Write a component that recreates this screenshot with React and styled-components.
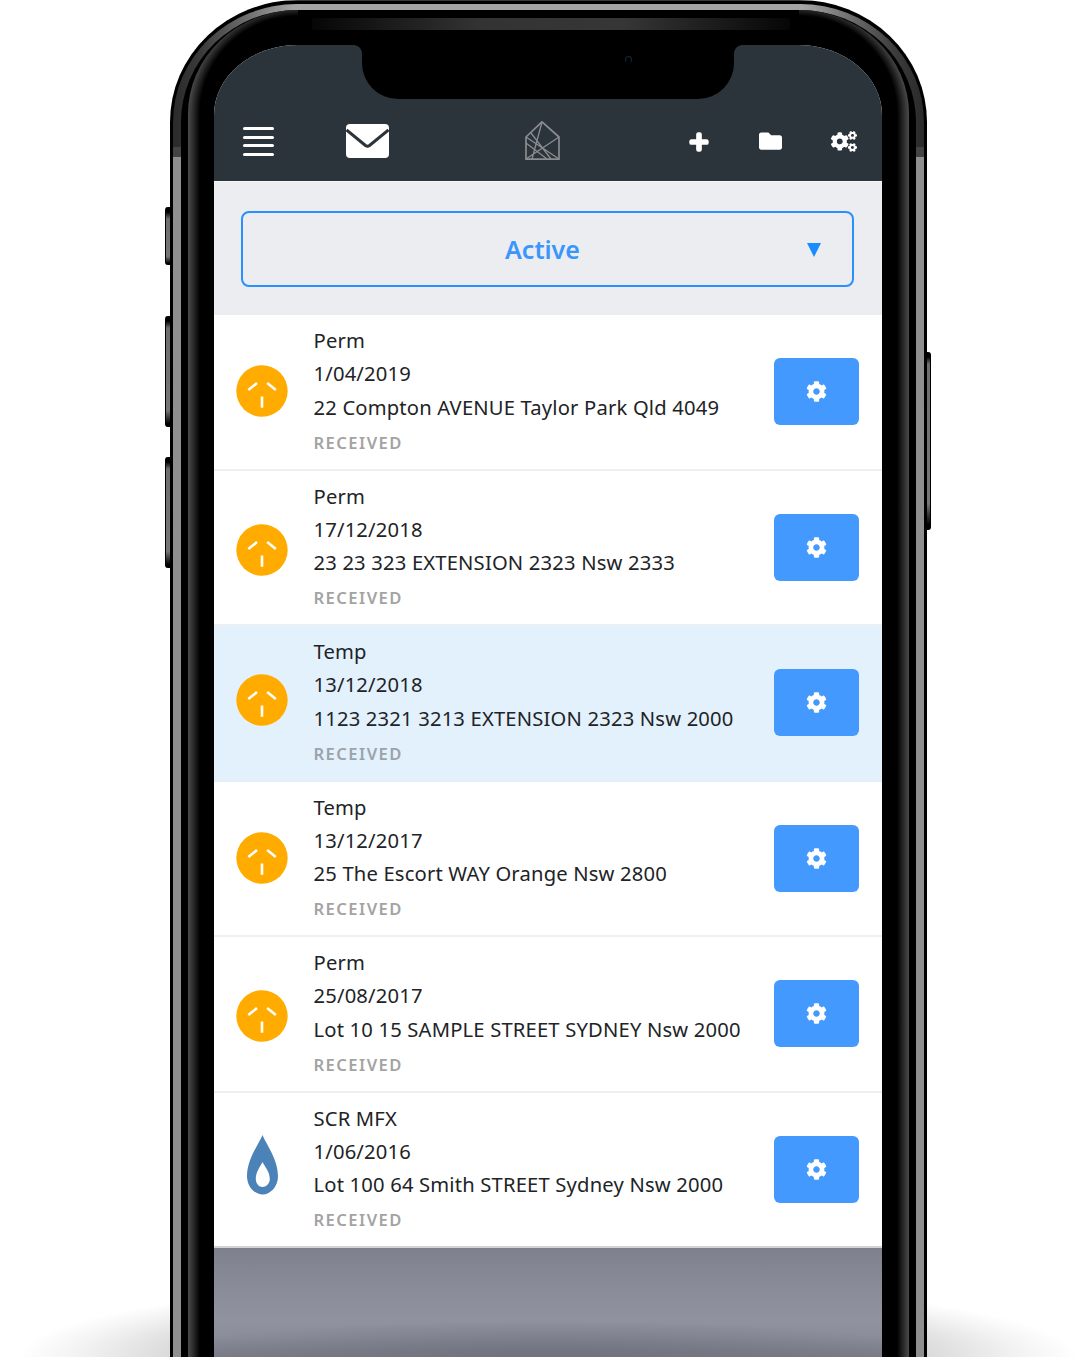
import React from "react";
import styled, { createGlobalStyle } from "styled-components";
import { FaCog, FaCogs, FaFolder, FaPlus } from "react-icons/fa";

const Global = createGlobalStyle`
  html, body { margin: 0; padding: 0; background: #fff; }
  * { box-sizing: border-box; }
`;

const Stage = styled.div`
  position: relative;
  width: 1092px;
  height: 1357px;
  overflow: hidden;
  padding-left: 170px;
  background: #fff;
  font-family: "Noto Sans", "Open Sans", sans-serif;
`;
const FloorShadow = styled.div`
  position: absolute;
  left: 18px;
  top: 1280px;
  width: 1060px;
  height: 154px;
  background: radial-gradient(closest-side, #aaa 0%, #dadada 71%, #f4f4f4 90%, #ffffff 100%);
`;
const Shell = styled.div`
  position: relative;
  width: 757px;
  height: 1560px;
  padding: 4px 3px 0;
  border-radius: 128px 128px 0 0 / 122px 122px 0 0;
  background: linear-gradient(#3a3a3a 0 1px, #000 1px);
`;
const SideKey = styled.div`
  position: absolute;
  top: ${(p) => p.$top}px;
  ${(p) => (p.$right ? "right: -4px;" : "left: -5px;")}
  width: ${(p) => (p.$right ? 4 : 5)}px;
  height: ${(p) => p.$h}px;
  border-radius: ${(p) => (p.$right ? "0 3px 3px 0" : "3px 0 0 3px")};
  background: linear-gradient(#000 0 5px, #6e6e6e 12px, #777 85%, #000 97%);
  border: solid #000;
  border-width: ${(p) => (p.$right ? "0 1px 0 0" : "0 0 0 1px")};
`;
const AntennaBand = styled.div`
  position: absolute;
  top: 147px;
  ${(p) => (p.$right ? "right: 3px;" : "left: 3px;")}
  width: 8px;
  height: 10px;
  background: #444;
`;
const Metal = styled.div`
  height: 100%;
  padding: 6px 8px 0;
  border-radius: 124px 124px 0 0 / 118px 118px 0 0;
  background:
    linear-gradient(
        90deg,
        #2a2a2a 0,
        #3c3c3c 30px,
        #a4a4a4 120px,
        #a4a4a4 calc(100% - 120px),
        #3c3c3c calc(100% - 30px),
        #2a2a2a 100%
      )
      top / 100% 145px no-repeat,
    #8f8f8f;
`;
const BlackRing = styled.div`
  position: relative;
  height: 100%;
  padding: 0 7px;
  border-radius: 116px 116px 0 0 / 112px 112px 0 0;
  background: #000;
`;
const Sheen = styled.div`
  height: 100%;
  padding: 14px 12px 0;
  border-radius: 110px 110px 0 0 / 104px 104px 0 0;
  background:
    radial-gradient(circle at 110px 104px, #000 98px, #4c4c4c 110px) left top / 110px 104px no-repeat,
    radial-gradient(circle at 0 104px, #000 98px, #4c4c4c 110px) right top / 110px 104px no-repeat,
    linear-gradient(90deg, #4c4c4c 0, #000 12px, #000 calc(100% - 12px), #4c4c4c 100%);
`;
const Bezel = styled.div`
  height: 100%;
  padding: 21px 15px 0 14px;
  border-radius: 104px 104px 0 0 / 96px 96px 0 0;
  background: #000;
`;
const Speaker = styled.div`
  position: absolute;
  left: 131px;
  top: 8px;
  width: 478px;
  height: 12px;
  background: linear-gradient(90deg, #060606 0%, #333 35%, #363636 65%, #060606 100%);
`;
const Screen = styled.div`
  position: relative;
  height: 100%;
  overflow: hidden;
  border-radius: 84px 84px 0 0 / 70px 70px 0 0;
  background: #fff;
`;
const Notch = styled.div`
  position: absolute;
  left: 148px;
  top: 0;
  width: 372px;
  height: 54px;
  background: #000;
  border-radius: 0 0 36px 36px;
  z-index: 2;
  &::before,
  &::after {
    content: "";
    position: absolute;
    top: 0;
    width: 8px;
    height: 8px;
  }
  &::before {
    left: -8px;
    background: radial-gradient(circle at 0 100%, transparent 7.5px, #000 8px);
  }
  &::after {
    right: -8px;
    background: radial-gradient(circle at 100% 100%, transparent 7.5px, #000 8px);
  }
`;
const Camera = styled.div`
  position: absolute;
  left: 263px;
  top: 11px;
  width: 7px;
  height: 7px;
  border-radius: 50%;
  border: 1px solid #12283a;
  border-bottom-color: transparent;
`;
const Header = styled.header`
  display: flex;
  align-items: center;
  height: 136px;
  padding: 56px 0 0 29px;
  background: #2b333b;
  color: #fff;
`;
const HeaderIcon = styled.span`
  display: flex;
  flex: none;
  align-items: center;
  justify-content: center;
  width: ${(p) => p.$w}px;
  margin-left: ${(p) => p.$gap || 0}px;
  margin-top: ${(p) => p.$dy || 0}px;
  color: #fff;
`;
const Hamburger = styled.span`
  display: flex;
  flex-direction: column;
  gap: 5.6px;
  width: 31px;
  margin-top: 1px;
`;
const HamburgerBar = styled.i`
  display: block;
  height: 3px;
  border-radius: 2px;
  background: #fff;
`;
const FilterBar = styled.div`
  height: 134px;
  padding: 29px 28px 0 27px;
  border-top: 1px solid #f6f7f8;
  background: #ebedf0;
`;
const Select = styled.div`
  position: relative;
  display: flex;
  align-items: center;
  justify-content: center;
  height: 76px;
  padding-right: 10px;
  border: 2px solid #2a8fff;
  border-radius: 8px;
  color: #3a96fb;
  font-size: 25px;
  font-weight: 600;
`;
const Caret = styled.span`
  position: absolute;
  right: 31px;
  top: 30px;
  width: 0;
  height: 0;
  border-left: 7.5px solid transparent;
  border-right: 7.5px solid transparent;
  border-top: 14px solid #1b8cff;
`;
const Row = styled.div`
  display: grid;
  grid-template-columns: 52px 1fr 85px;
  column-gap: 26px;
  height: 155.5px;
  padding: 0 23px 0 22px;
  border-bottom: 2px solid ${(p) => (p.$last ? "#d2d3d7" : p.$active ? "#e3eef8" : "#eeeff2")};
  background: ${(p) => (p.$active ? "#e3f1fc" : "#fff")};
`;
const RowIcon = styled.div`
  display: flex;
  justify-content: center;
  margin-top: ${(p) => p.$top}px;
`;
const RowText = styled.div`
  min-width: 0;
  padding-top: 9px;
  white-space: nowrap;
`;
const Line = styled.div`
  height: 33.4px;
  margin-left: -0.5px;
  line-height: 33.4px;
  color: #212326;
  font-size: 20.2px;
  letter-spacing: 0.18px;
`;
const Status = styled.div`
  margin-top: 1.5px;
  margin-left: -0.5px;
  line-height: 33px;
  color: ${(p) => (p.$active ? "#9aa3ab" : "#a3a3a3")};
  font-size: 16.6px;
  font-weight: 600;
  letter-spacing: 1.45px;
`;
const GearButton = styled.button`
  display: flex;
  align-items: center;
  justify-content: center;
  align-self: center;
  width: 85px;
  height: 67px;
  padding: 0;
  border: 0;
  border-radius: 6px;
  background: #4499fe;
  color: #fff;
  font-size: 21px;
`;
const BottomFade = styled.div`
  height: 150px;
  background:
    radial-gradient(ellipse 420px 36px at 50% 109px, #6f727e 0%, rgba(111, 114, 126, 0) 100%),
    linear-gradient(#7e818d 0%, #8a8c9a 28%, #90929f 48%, #8b8d9b 60%, #7a7c88 73%, #767985 100%);
`;

const Envelope = () => (
  <svg width="43" height="34" viewBox="0 0 43 34">
    <rect x="0" y="0" width="43" height="34" rx="4" fill="#fff" />
    <path d="M.5 6 L19.5 21.5 Q21.5 23 23.5 21.5 L42.5 6" fill="none" stroke="#2b333b" strokeWidth="3" />
  </svg>
);
const HouseLogo = () => (
  <svg width="35" height="39" viewBox="0 0 35 39" fill="none" stroke="#8b8d8f" strokeWidth="1.3">
    <path d="M17 .8 L34 16 V38.2 H1 V16 Z" strokeWidth="1.7" />
    <path d="M1 16 L34 38 M1 38 L34 16 M17 1 L7 38 M6 12 L26 38 M1 22 L22 38" />
  </svg>
);
const PowerPoint = () => (
  <svg width="52" height="52" viewBox="-26 -26 52 52">
    <circle r="25.7" fill="#ffab00" />
    <path d="M-13.7 -.9 L-5 -8 M5.2 -8 L13.8 -.9 M0 5.5 V16.7" stroke="#fff" strokeWidth="2.6" fill="none" />
  </svg>
);
const GasDrop = () => (
  <svg width="31" height="60" viewBox="0 0 31 60">
    <path
      fillRule="evenodd"
      fill="#4b82b8"
      d="M15.5 0 C19 9 31 24 31 41 C31 52 23 59.5 15.5 59.5 C8 59.5 0 52 0 41 C0 24 12 9 15.5 0 Z M15.5 27 C13 32 8.8 37 8.8 44 C8.8 48.5 12 52 15.5 52 C19 52 22.8 48.5 22.8 44 C22.8 37 18 32 15.5 27 Z"
    />
  </svg>
);

const rows = [
  { kind: "Perm", date: "1/04/2019", addr: "22 Compton AVENUE Taylor Park Qld 4049", top: 50 },
  { kind: "Perm", date: "17/12/2018", addr: "23 23 323 EXTENSION 2323 Nsw 2333", top: 53.5 },
  { kind: "Temp", date: "13/12/2018", addr: "1123 2321 3213 EXTENSION 2323 Nsw 2000", top: 48, active: true },
  { kind: "Temp", date: "13/12/2017", addr: "25 The Escort WAY Orange Nsw 2800", top: 50.5 },
  { kind: "Perm", date: "25/08/2017", addr: "Lot 10 15 SAMPLE STREET SYDNEY Nsw 2000", top: 53 },
  { kind: "SCR MFX", date: "1/06/2016", addr: "Lot 100 64 Smith STREET Sydney Nsw 2000", top: 42.5, gas: true, last: true },
];

export default function App() {
  return (
    <Stage>
      <Global />
      <FloorShadow />
      <Shell>
        <SideKey $top={207} $h={58} />
        <SideKey $top={316} $h={111} />
        <SideKey $top={457} $h={111} />
        <SideKey $right $top={352} $h={178} />
        <Metal>
          <BlackRing>
            <Speaker />
            <Sheen>
              <Bezel>
                <Screen>
                  <Notch>
                    <Camera />
                  </Notch>
                  <Header>
                    <Hamburger>
                      <HamburgerBar />
                      <HamburgerBar />
                      <HamburgerBar />
                      <HamburgerBar />
                    </Hamburger>
                    <HeaderIcon $w={43} $gap={72}><Envelope /></HeaderIcon>
                    <HeaderIcon $w={35} $gap={136} $dy={-1}><HouseLogo /></HeaderIcon>
                    <HeaderIcon $w={20} $gap={129} $dy={1}>
                      <FaPlus size={20} stroke="currentColor" strokeWidth={50} />
                    </HeaderIcon>
                    <HeaderIcon $w={23} $gap={50} $dy={-1}><FaFolder size={24} /></HeaderIcon>
                    <HeaderIcon $w={26} $gap={49}><FaCogs size={27} /></HeaderIcon>
                  </Header>
                  <FilterBar>
                    <Select>
                      Active
                      <Caret />
                    </Select>
                  </FilterBar>
                  {rows.map((r) => (
                    <Row key={r.addr} $active={r.active} $last={r.last}>
                      <RowIcon $top={r.top}>{r.gas ? <GasDrop /> : <PowerPoint />}</RowIcon>
                      <RowText>
                        <Line>{r.kind}</Line>
                        <Line>{r.date}</Line>
                        <Line>{r.addr}</Line>
                        <Status $active={r.active}>RECEIVED</Status>
                      </RowText>
                      <GearButton aria-label="settings"><FaCog /></GearButton>
                    </Row>
                  ))}
                  <BottomFade />
                </Screen>
              </Bezel>
            </Sheen>
          </BlackRing>
        </Metal>
        <AntennaBand />
        <AntennaBand $right />
      </Shell>
    </Stage>
  );
}
